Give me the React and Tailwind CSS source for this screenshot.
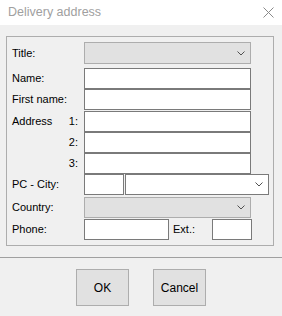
const font = { fontFamily: '"Liberation Sans", Arial, sans-serif' };

const Chevron = () => (
  <svg width="8" height="5" viewBox="0 0 8 5" className="shrink-0">
    <path d="M0.5 0.5 L4 4 L7.5 0.5" fill="none" stroke="#505050" strokeWidth="1" />
  </svg>
);

const Input = ({ className = "" }) => (
  <div className={`h-[21px] shrink-0 bg-white border border-[#7a7a7a] ${className}`} />
);

const Select = ({ className = "", light }) => (
  <div
    className={`h-[21px] shrink-0 flex items-center justify-end pr-[5px] border ${
      light ? "bg-white border-[#7a7a7a]" : "bg-[#e1e1e1] border-[#adadad]"
    } ${className}`}
  >
    <Chevron />
  </div>
);

const Row = ({ label, num, children, className = "" }) => (
  <div className={`flex items-center ${className}`}>
    <div className="w-[72px] shrink-0 flex justify-between pr-[6px] text-[11px] text-black leading-none">
      <span>{label}</span>
      {num && <span>{num}</span>}
    </div>
    {children}
  </div>
);

export default function App() {
  return (
    <div className="w-[282px] h-[316px] bg-[#f0f0f0] flex flex-col" style={font}>
      {/* Title bar */}
      <div className="h-[25px] bg-white flex items-center justify-between pl-[8px] pr-[8px]">
        <span className="text-[12.5px] text-[#a0a0a0]">Delivery address</span>
        <svg width="11" height="11" viewBox="0 0 11 11">
          <path d="M0.5 0.5 L10.5 10.5 M10.5 0.5 L0.5 10.5" stroke="#8a8a8a" strokeWidth="1" />
        </svg>
      </div>

      {/* Group box */}
      <div className="ml-[6px] mt-[11px] w-[268px] h-[210px] border border-[#adadad] pl-[5px] pt-[5px] flex flex-col">
        <Row label="Title:" className="h-[22px]">
          <Select className="w-[167px] h-[22px]" />
        </Row>
        <Row label="Name:" className="mt-[4px]">
          <Input className="w-[167px]" />
        </Row>
        <Row label="First name:">
          <Input className="w-[167px]" />
        </Row>
        <Row label="Address" num="1:" className="mt-[1px]">
          <Input className="w-[167px]" />
        </Row>
        <Row label="" num="2:">
          <Input className="w-[167px]" />
        </Row>
        <Row label="" num="3:">
          <Input className="w-[167px]" />
        </Row>
        <Row label="PC - City:">
          <Input className="w-[40px]" />
          <Select light className="w-[144px] ml-[1px]" />
        </Row>
        <Row label="Country:" className="mt-[2px]">
          <Select className="w-[167px]" />
        </Row>
        <Row label="Phone:" className="mt-[1px]">
          <Input className="w-[85px]" />
          <span className="ml-[4px] w-[39px] shrink-0 text-[11px] text-black">Ext.:</span>
          <Input className="w-[40px]" />
        </Row>
      </div>

      {/* Separator */}
      <div className="mt-[11px] h-px bg-[#a0a0a0]" />

      {/* Buttons */}
      <div className="flex pl-[76px] gap-[24px] mt-[11px]">
        <button className="w-[53px] h-[37px] bg-[#e1e1e1] border border-[#adadad] text-[12px] text-black">
          OK
        </button>
        <button className="w-[53px] h-[37px] bg-[#e1e1e1] border border-[#adadad] text-[12px] text-black">
          Cancel
        </button>
      </div>
    </div>
  );
}
